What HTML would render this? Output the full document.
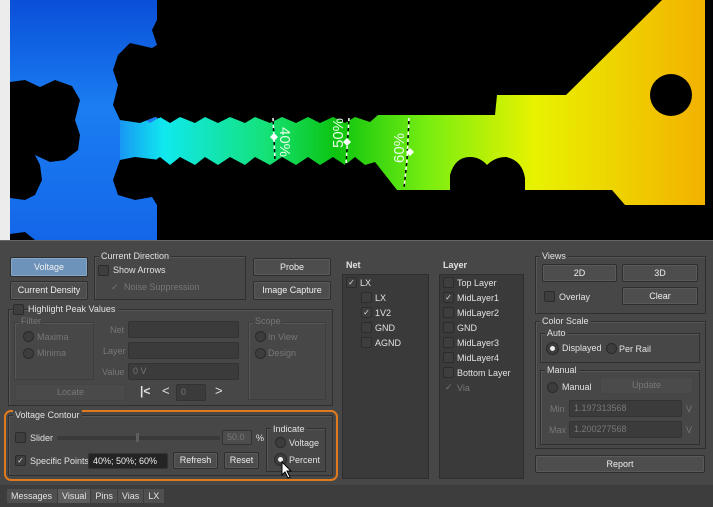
<!DOCTYPE html>
<html><head><meta charset="utf-8"><style>
*{box-sizing:border-box;margin:0;padding:0}
body{width:713px;height:507px;overflow:hidden;background:#474747;font-family:"Liberation Sans",sans-serif;font-size:9px;color:#e2e2e2;position:relative}
.a{position:absolute;white-space:nowrap}
.btn{position:absolute;border:1px solid #2e2e2e;background:#4d4d4d;border-radius:2px;box-shadow:inset 0 0 0 1px #5a5a5a;text-align:center;color:#eee}
.grp{position:absolute;border:1px solid #2f2f2f;box-shadow:1px 1px 0 #575757 inset}
.lbl{position:absolute;top:-6px;left:4px;background:#474747;padding:0 2px;line-height:11px}
.cb{position:absolute;width:11px;height:11px;border:1px solid #2c2c2c;background:#3e3e3e;border-radius:2px;font-size:8px;line-height:9px;text-align:center;color:#ddd}
.in{position:absolute;background:#3b3b3b;border:1px solid #333;border-radius:2px;color:#777;padding-left:4px}
.rd{position:absolute;width:11px;height:11px;border-radius:50%;border:1px solid #2a2a2a;background:#3d3d3d}
.dis{color:#777}
.list{position:absolute;background:#3a3a3a;border:1px solid #2e2e2e}
</style></head><body>
<svg class="a" style="left:0;top:0" width="713" height="241">
<defs><linearGradient id="g" x1="0" x2="713" gradientUnits="userSpaceOnUse">
<stop offset="0" stop-color="#0a56d8"/><stop offset="0.15" stop-color="#1a80f5"/><stop offset="0.23" stop-color="#10e8ee"/><stop offset="0.37" stop-color="#14e27a"/><stop offset="0.47" stop-color="#0cc410"/><stop offset="0.6" stop-color="#78ee10"/><stop offset="0.75" stop-color="#e8f200"/><stop offset="1" stop-color="#f4ae00"/></linearGradient>
<linearGradient id="b" x1="0" y1="0" x2="0" y2="240" gradientUnits="userSpaceOnUse"><stop offset="0" stop-color="#0a4fd8"/><stop offset="0.45" stop-color="#1a7ef2"/><stop offset="1" stop-color="#1466e8"/></linearGradient></defs>
<rect width="713" height="241" fill="#000"/>
<rect x="0" y="0" width="10" height="241" fill="#ececec"/>
<rect x="10" y="0" width="147" height="241" fill="url(#b)"/>
<path d="M120,117 L140,117 L150,123 L160,117 L170,123 L180,117 L195,123 L205,117 L218,123 L230,117 L245,123 L255,117 L270,123 L282,117 L296,123 L308,117 L320,123 L333,117 L345,123 L355,117 L370,122 L378,115 L495,115 L497,95 L566,95 L662,0 L705,0 L705,205 L625,205 L612,190 L397,190 L375,162 L365,165 L355,157 L345,165 L333,157 L320,165 L308,157 L296,165 L282,157 L270,165 L255,157 L245,165 L230,157 L218,165 L205,157 L195,165 L180,157 L170,165 L160,157 L148,165 L135,157 L120,160 Z" fill="url(#g)"/>
<path d="M10,82 L25,80 L40,87 L55,80 L72,86 L80,100 L75,120 L80,135 L78,150 L65,160 L50,162 L35,155 L40,165 L42,180 L35,195 L25,200 L10,198 Z" fill="#000"/>
<path d="M157,0 L160,0 L160,118 L155,117 L140,123 L120,120 L113,105 L118,85 L113,70 L118,55 L130,43 L152,48 L157,45 L152,30 L157,20 Z" fill="#000"/>
<path d="M160,160 L135,157 L120,160 L113,180 L118,195 L135,200 L152,197 L157,205 L160,205 Z" fill="#000"/>
<path d="M10,234 L25,232 L35,240 L10,241 Z" fill="#000"/>
<ellipse cx="671" cy="95" rx="21" ry="21" fill="#000"/>
<path d="M450,191 L450,175 Q455,157 470,157 Q480,157 487,165 Q495,157 506,157 Q522,160 525,178 L525,191 Z" fill="#000"/>
<g stroke="#fff" stroke-width="1.5" stroke-dasharray="4 3" fill="none">
<path d="M273,118 L275,160"/><path d="M349,118 L346,165"/><path d="M409,118 L407,160 L404,188"/></g>
<g stroke="#000" stroke-width="1.5" stroke-dasharray="3 4" stroke-dashoffset="4" fill="none">
<path d="M273,118 L275,160"/><path d="M349,118 L346,165"/><path d="M409,118 L407,160 L404,188"/></g>
<g fill="#fff"><path d="M274,133 l4,4 l-4,4 l-4,-4z"/><path d="M347,138 l4,4 l-4,4 l-4,-4z"/><path d="M410,148 l4,4 l-4,4 l-4,-4z"/></g>
<g fill="#e8ffe8" font-family="Liberation Sans" font-size="15">
<text transform="translate(280,127) rotate(90)">40%</text>
<text transform="translate(343,148) rotate(-90)">50%</text>
<text transform="translate(404,163) rotate(-90)">60%</text></g>
</svg>
<div class="a" style="left:0;top:240px;width:713px;height:1px;background:#666"></div>

<div class="btn" style="left:10px;top:257px;width:78px;height:20px;line-height:18px;background:#6e93ba;box-shadow:inset 0 0 0 1px #86a7c8">Voltage</div>
<div class="btn" style="left:10px;top:281px;width:78px;height:19px;line-height:17px">Current Density</div>
<div class="grp" style="left:94px;top:256px;width:152px;height:44px"><span class="lbl">Current Direction</span></div>
<div class="cb" style="left:98px;top:265px"></div><div class="a" style="left:113px;top:265px">Show Arrows</div>
<div class="a dis" style="left:111px;top:282px">✓</div><div class="a dis" style="left:124px;top:282px">Noise Suppression</div>
<div class="btn" style="left:253px;top:258px;width:78px;height:18px;line-height:16px">Probe</div>
<div class="btn" style="left:253px;top:281px;width:78px;height:19px;line-height:17px">Image Capture</div>

<div class="grp" style="left:8px;top:309px;width:325px;height:97px"></div>
<div class="cb" style="left:13px;top:304px"></div><div class="a" style="left:28px;top:304px;background:#474747;padding-right:3px">Highlight Peak Values</div>
<div class="grp" style="left:14px;top:322px;width:80px;height:58px;border-color:#3d3d3d"><span class="lbl dis" style="top:-7px">Filter</span></div>
<div class="rd" style="left:23px;top:331px"></div><div class="a dis" style="left:37px;top:332px">Maxima</div>
<div class="rd" style="left:23px;top:348px"></div><div class="a dis" style="left:37px;top:348px">Minima</div>
<div class="a dis" style="left:110px;top:325px">Net</div><div class="in" style="left:128px;top:321px;width:111px;height:17px"></div>
<div class="a dis" style="left:103px;top:346px">Layer</div><div class="in" style="left:128px;top:342px;width:111px;height:17px"></div>
<div class="a dis" style="left:102px;top:367px">Value</div><div class="in" style="left:128px;top:363px;width:111px;height:17px;line-height:15px">0 V</div>
<div class="grp" style="left:248px;top:322px;width:78px;height:78px;border-color:#3d3d3d"><span class="lbl dis" style="top:-7px">Scope</span></div>
<div class="rd" style="left:255px;top:331px"></div><div class="a dis" style="left:268px;top:332px">In View</div>
<div class="rd" style="left:255px;top:348px"></div><div class="a dis" style="left:268px;top:348px">Design</div>
<div class="btn dis" style="left:15px;top:384px;width:111px;height:17px;line-height:15px;box-shadow:none;border-color:#444;background:#4a4a4a;color:#777">Locate</div>
<div class="a" style="left:140px;top:384px;font-size:12px;font-weight:bold">|&lt;</div>
<div class="a" style="left:162px;top:383px;font-size:13px">&lt;</div>
<div class="in" style="left:176px;top:384px;width:30px;height:17px;line-height:15px">0</div>
<div class="a" style="left:215px;top:383px;font-size:13px">&gt;</div>

<div class="a" style="left:4px;top:410px;width:334px;height:71px;border:2px solid #e07a1f;border-radius:7px"></div>
<div class="grp" style="left:8px;top:415px;width:325px;height:61px"><span class="lbl" style="top:-6px">Voltage Contour</span></div>
<div class="cb" style="left:15px;top:432px"></div><div class="a" style="left:30px;top:433px">Slider</div>
<div class="a" style="left:57px;top:436px;width:163px;height:4px;background:#3a3a3a;border-radius:2px"></div>
<div class="a" style="left:136px;top:433px;width:3px;height:9px;background:#5e5e5e"></div>
<div class="in" style="left:222px;top:430px;width:30px;height:15px;line-height:13px;background:#4d4d4d">50.0</div>
<div class="a" style="left:256px;top:433px">%</div>
<div class="cb" style="left:15px;top:455px">✓</div><div class="a" style="left:30px;top:456px">Specific Points</div>
<div class="in" style="left:88px;top:453px;width:80px;height:16px;line-height:14px;background:#242424;color:#eee">40%; 50%; 60%</div>
<div class="btn" style="left:173px;top:452px;width:45px;height:17px;line-height:15px">Refresh</div>
<div class="btn" style="left:224px;top:452px;width:35px;height:17px;line-height:15px">Reset</div>
<div class="grp" style="left:266px;top:428px;width:60px;height:44px"><span class="lbl" style="top:-5px">Indicate</span></div>
<div class="rd" style="left:275px;top:437px"></div><div class="a" style="left:289px;top:438px">Voltage</div>
<div class="rd" style="left:275px;top:454px;background:#eee;border:3px solid #3d3d3d;box-shadow:0 0 0 1px #2a2a2a"></div><div class="a" style="left:289px;top:455px">Percent</div>
<svg class="a" style="left:281px;top:461px" width="12" height="18"><path d="M1,1 L1,14 L4,11 L7,17 L9,16 L6,10 L10,10 Z" fill="#fff" stroke="#000" stroke-width="1"/></svg>

<div class="a" style="left:0;top:485px;width:713px;height:22px;background:#3d3d3d"></div>
<div class="a" style="left:7px;top:489px;height:14px;display:flex;gap:1px">
<span style="background:#4f4f4f;padding:2px 5px 0 4px">Messages</span><span style="background:#5c5c5c;padding:2px 4px 0">Visual</span><span style="background:#4f4f4f;padding:2px 4px 0">Pins</span><span style="background:#4f4f4f;padding:2px 4px 0">Vias</span><span style="background:#4f4f4f;padding:2px 5px 0 4px">LX</span></div>

<div class="a" style="left:346px;top:260px;font-weight:bold">Net</div>
<div class="list" style="left:342px;top:274px;width:87px;height:205px"></div>
<div class="cb" style="left:346px;top:277px">✓</div><div class="a" style="left:360px;top:278px">LX</div>
<div class="cb" style="left:361px;top:292px"></div><div class="a" style="left:375px;top:293px">LX</div>
<div class="cb" style="left:361px;top:307px">✓</div><div class="a" style="left:375px;top:308px">1V2</div>
<div class="cb" style="left:361px;top:322px"></div><div class="a" style="left:375px;top:323px">GND</div>
<div class="cb" style="left:361px;top:337px"></div><div class="a" style="left:375px;top:338px">AGND</div>

<div class="a" style="left:443px;top:260px;font-weight:bold">Layer</div>
<div class="list" style="left:439px;top:274px;width:85px;height:205px"></div>
<div class="cb" style="left:443px;top:277px"></div><div class="a" style="left:457px;top:278px">Top Layer</div>
<div class="cb" style="left:443px;top:292px">✓</div><div class="a" style="left:457px;top:293px">MidLayer1</div>
<div class="cb" style="left:443px;top:307px"></div><div class="a" style="left:457px;top:308px">MidLayer2</div>
<div class="cb" style="left:443px;top:322px"></div><div class="a" style="left:457px;top:323px">GND</div>
<div class="cb" style="left:443px;top:337px"></div><div class="a" style="left:457px;top:338px">MidLayer3</div>
<div class="cb" style="left:443px;top:352px"></div><div class="a" style="left:457px;top:353px">MidLayer4</div>
<div class="cb" style="left:443px;top:367px"></div><div class="a" style="left:457px;top:368px">Bottom Layer</div>
<div class="a dis" style="left:445px;top:382px">✓</div><div class="a dis" style="left:457px;top:383px">Via</div>

<div class="grp" style="left:535px;top:256px;width:171px;height:58px"><span class="lbl">Views</span></div>
<div class="btn" style="left:542px;top:264px;width:75px;height:18px;line-height:16px">2D</div>
<div class="btn" style="left:622px;top:264px;width:76px;height:18px;line-height:16px">3D</div>
<div class="cb" style="left:544px;top:291px"></div><div class="a" style="left:559px;top:292px">Overlay</div>
<div class="btn" style="left:622px;top:287px;width:76px;height:18px;line-height:16px">Clear</div>
<div class="grp" style="left:535px;top:321px;width:171px;height:128px"><span class="lbl">Color Scale</span></div>
<div class="grp" style="left:540px;top:333px;width:160px;height:30px"><span class="lbl">Auto</span></div>
<div class="rd" style="left:547px;top:343px;background:#eee;border:3px solid #3d3d3d;box-shadow:0 0 0 1px #2a2a2a"></div><div class="a" style="left:562px;top:343px">Displayed</div>
<div class="rd" style="left:606px;top:343px"></div><div class="a" style="left:619px;top:344px">Per Rail</div>
<div class="grp" style="left:540px;top:370px;width:160px;height:75px"><span class="lbl">Manual</span></div>
<div class="rd" style="left:547px;top:382px"></div><div class="a" style="left:562px;top:382px">Manual</div>
<div class="btn" style="left:600px;top:377px;width:93px;height:17px;line-height:15px;color:#777;box-shadow:none;border-color:#454545;background:#4b4b4b">Update</div>
<div class="a dis" style="left:550px;top:404px">Min</div><div class="in" style="left:569px;top:400px;width:113px;height:17px;line-height:15px">1.197313568</div><div class="a dis" style="left:686px;top:404px">V</div>
<div class="a dis" style="left:549px;top:425px">Max</div><div class="in" style="left:569px;top:421px;width:113px;height:17px;line-height:15px">1.200277568</div><div class="a dis" style="left:686px;top:425px">V</div>
<div class="btn" style="left:535px;top:455px;width:170px;height:18px;line-height:16px">Report</div>
</body></html>
